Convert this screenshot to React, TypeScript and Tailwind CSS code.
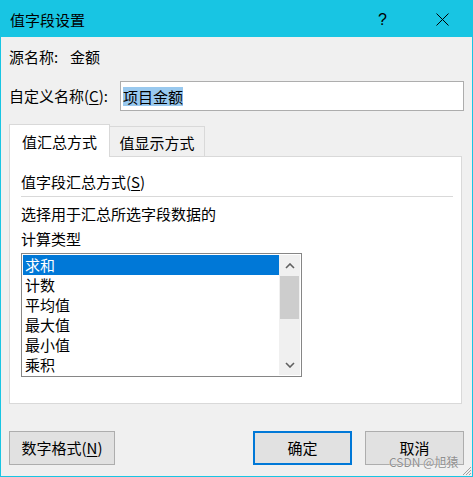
import React from "react";

const font = { fontFamily: '"Noto Sans CJK SC", "Noto Sans", sans-serif' };

function Chevron({ up }: { up?: boolean }) {
  return (
    <svg width="10" height="6" viewBox="0 0 10 6">
      <path
        d={up ? "M1 5 L5 1 L9 5" : "M1 1 L5 5 L9 1"}
        fill="none"
        stroke="#606060"
        strokeWidth="1.6"
      />
    </svg>
  );
}

export default function App() {
  const items = ["求和", "计数", "平均值", "最大值", "最小值", "乘积"];
  return (
    <div
      className="relative w-[473px] h-[477px] bg-[#f0f0f0] border-x border-b border-[#18c5e3] flex flex-col text-[15px] leading-[20px] text-black"
      style={font}
    >
      {/* Title bar */}
      <div className="h-[37px] shrink-0 bg-[#18c5e3] flex items-center pl-[9px] pt-[2px]">
        <span className="text-[15px]">值字段设置</span>
        <span className="ml-auto mr-[49px] text-[16px] font-[Liberation_Sans]">?</span>
        <svg width="13" height="13" viewBox="0 0 13 13" className="mr-[23px]">
          <path d="M0.5 0.5 L12.5 12.5 M12.5 0.5 L0.5 12.5" stroke="#000" strokeWidth="1" />
        </svg>
      </div>

      {/* Source name */}
      <div className="flex px-[8px] mt-[10px] h-[20px]">
        <span className="w-[61px]">源名称:</span>
        <span>金额</span>
      </div>

      {/* Custom name */}
      <div className="flex items-center px-[8px] mt-[14px]">
        <span className="w-[111px]">
          自定义名称(<u className="underline-offset-2">C</u>):
        </span>
        <div className="w-[344px] h-[30px] border border-[#adadad] bg-white flex items-center pl-[2px]">
          <span className="bg-[#99c9ef] h-[19px] leading-[19px]">项目金额</span>
        </div>
      </div>

      {/* Tabs */}
      <div className="flex items-end px-[8px] mt-[13px] h-[32px]">
        <div className="relative z-10 w-[101px] h-[33px] -mb-px bg-white border-l border-t border-r border-[#d9d9d9] flex items-center justify-center pt-[2px]">
          值汇总方式
        </div>
        <div className="w-[95px] h-[30px] border-t border-r border-[#d9d9d9] flex items-center justify-center pt-[3px]">
          值显示方式
        </div>
      </div>

      {/* Panel */}
      <div className="mx-[8px] w-[453px] h-[248px] bg-white border border-[#d9d9d9] flex flex-col">
        <div className="mt-[15px] ml-[11px]">
          值字段汇总方式(<u className="underline-offset-2">S</u>)
        </div>
        <div className="mt-[4px] ml-[11px] mr-[8px] h-px bg-[#d9d9d9]" />
        <div className="mt-[4px] ml-[11px] leading-[25px]">
          <div>选择用于汇总所选字段数据的</div>
          <div>计算类型</div>
        </div>
        {/* Listbox */}
        <div className="mt-[2px] ml-[11px] w-[281px] h-[124px] border border-[#868686] p-px flex overflow-hidden">
          <div className="w-[256px] flex flex-col overflow-hidden">
            {items.map((t, i) => (
              <div
                key={t}
                className={
                  "h-[20px] shrink-0 pl-[2px] " +
                  (i === 0 ? "bg-[#0078d7] text-white" : "")
                }
              >
                {t}
              </div>
            ))}
          </div>
          <div className="w-[21px] bg-[#f0f0f0] flex flex-col">
            <div className="h-[21px] flex items-center justify-center">
              <Chevron up />
            </div>
            <div className="h-[43px] mx-px bg-[#cdcdcd]" />
            <div className="flex-1" />
            <div className="h-[21px] flex items-center justify-center">
              <Chevron />
            </div>
          </div>
        </div>
      </div>

      {/* Buttons */}
      <div className="flex px-[8px] mt-[27px]">
        <div className="w-[106px] h-[34px] border border-[#adadad] bg-[#e1e1e1] flex items-center justify-center">
          数字格式(<u className="underline-offset-2">N</u>)
        </div>
        <div className="ml-auto w-[99px] h-[34px] border-2 border-[#0078d7] bg-[#e1e1e1] flex items-center justify-center">
          确定
        </div>
        <div className="ml-[13px] w-[99px] h-[34px] border border-[#adadad] bg-[#e1e1e1] flex items-center justify-center">
          取消
        </div>
      </div>

      {/* Watermark */}
      <div
        className="absolute left-[388px] top-[455px] text-[12px] leading-[14px] text-[#8e8e8e] whitespace-nowrap"
        style={{ textShadow: "0 0 1px #fff" }}
      >
        CSDN @旭猿
      </div>

      {/* Resize grip */}
      <svg
        className="absolute right-0 bottom-0"
        width="11"
        height="11"
        viewBox="0 0 11 11"
      >
        <path d="M10 2 L2 10 M10 5 L5 10 M10 8 L8 10" stroke="#a0a0a0" strokeWidth="1" />
      </svg>
    </div>
  );
}
